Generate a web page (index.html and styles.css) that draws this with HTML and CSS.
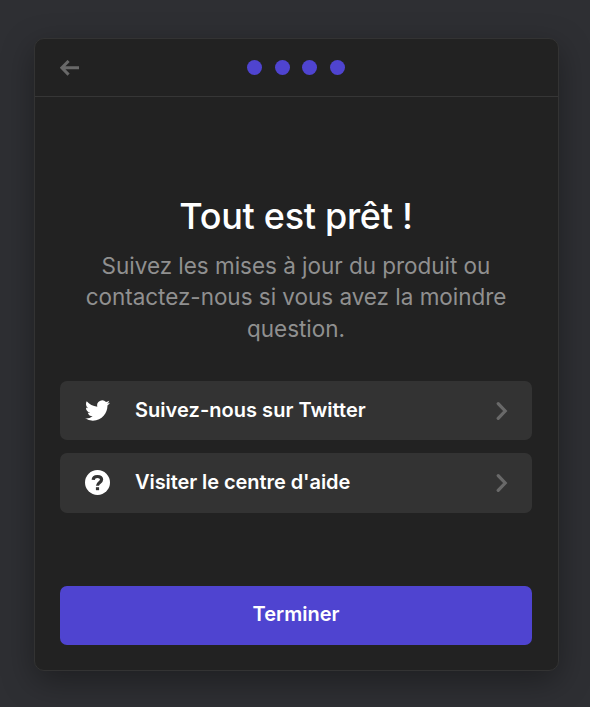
FILE: index.html
```html
<!DOCTYPE html>
<html lang="fr">
<head>
<meta charset="utf-8">
<title>Tout est prêt !</title>
<link rel="stylesheet" href="styles.css">
</head>
<body>
<main class="card">
  <header class="header">
    <svg class="back" viewBox="0 0 20 16" aria-hidden="true"><path d="M8.6 1 1.8 7.8l6.8 6.8M2.3 7.8H19"/></svg>
    <div class="steps"><i class="dot"></i><i class="dot"></i><i class="dot"></i><i class="dot"></i></div>
  </header>
  <section class="content">
    <h1 class="title">Tout est prêt !</h1>
    <p class="text">Suivez les mises à jour du produit ou contactez-nous si vous avez la moindre question.</p>
    <nav class="links">
      <a class="link">
        <svg class="icon" viewBox="0 0 24 24" aria-hidden="true"><path d="M23.95 4.57a10 10 0 0 1-2.82.77 4.96 4.96 0 0 0 2.16-2.72c-.95.56-2 .96-3.12 1.19a4.92 4.92 0 0 0-8.39 4.48C7.69 8.1 4.07 6.13 1.64 3.16a4.82 4.82 0 0 0-.67 2.48c0 1.71.87 3.21 2.19 4.1a4.9 4.9 0 0 1-2.23-.62v.06a4.92 4.92 0 0 0 3.95 4.83 5 5 0 0 1-2.21.08 4.94 4.94 0 0 0 4.6 3.42A9.87 9.87 0 0 1 0 19.54a13.99 13.99 0 0 0 7.55 2.21c9.05 0 14-7.5 14-13.98 0-.21 0-.42-.02-.63a9.94 9.94 0 0 0 2.46-2.55z"/></svg>
        <span class="label">Suivez-nous sur Twitter</span>
        <svg class="chevron" viewBox="0 0 12 20" aria-hidden="true"><path d="m2.2 2.6 7 7.4-7 7.4"/></svg>
      </a>
      <a class="link link-help">
        <svg class="icon" viewBox="0 0 25 25" aria-hidden="true"><circle cx="12.5" cy="12.5" r="12.5"/><path class="question" d="M8.2 9.9C8.3 7.6 9.9 6.5 12.4 6.5c2.6 0 4.2 1.1 4.2 3.1 0 2.8-4.1 2.9-4.1 6.2"/><path class="question-dot" d="M10.9 17.2h3.2v3h-3.2z"/></svg>
        <span class="label">Visiter le centre d'aide</span>
        <svg class="chevron" viewBox="0 0 12 20" aria-hidden="true"><path d="m2.2 2.6 7 7.4-7 7.4"/></svg>
      </a>
    </nav>
    <button class="done">Terminer</button>
  </section>
</main>
</body>
</html>
```
FILE: styles.css
```css
* { box-sizing: border-box; }
body {
  margin: 0;
  height: 707px;
  padding: 38px 0 0 34px;
  overflow: hidden;
  background: #2e2f33;
  font-family: Inter, sans-serif;
}
.card {
  width: 525px;
  height: 633px;
  border: 1px solid #333;
  border-radius: 10px;
  background: #222;
  box-shadow: 0 10px 32px rgba(0, 0, 0, .35);
}
.header {
  height: 58px;
  padding: 0 26px 0 25px;
  display: grid;
  grid-template-columns: 20px 1fr 20px;
  align-items: center;
  border-bottom: 1px solid #363636;
}
.back { width: 20px; height: 16px; fill: none; stroke: #696969; stroke-width: 3; }
.steps { display: flex; justify-content: center; gap: 12.6px; }
.dot { width: 15px; height: 15px; border-radius: 50%; background: #4f44d0; }
.content { padding: 96px 26px 0 25px; }
.title {
  margin: 0;
  color: #fff;
  font-size: 36px;
  font-weight: 500;
  line-height: 46px;
  letter-spacing: -.3px;
  text-align: center;
}
.text {
  margin: 11px 0 0;
  color: #909090;
  font-size: 22.5px;
  line-height: 31.4px;
  letter-spacing: -.03px;
  text-align: center;
}
.links { margin-top: 36.5px; display: grid; gap: 13px; }
.link {
  height: 59px;
  padding: 0 24px 0 25px;
  display: flex;
  align-items: center;
  border-radius: 7px;
  background: #333;
  color: #fff;
}
.link-help { height: 60px; }
.icon { width: 25px; height: 25px; fill: #fff; }
.link:first-child .icon, .link:first-child .chevron { margin-top: 1px; }
.icon .question { fill: none; stroke: #333; stroke-width: 3.2; }
.icon .question-dot { fill: #333; }
.label { flex: 1; margin-left: 25px; font-size: 20px; font-weight: 600; line-height: 30px; letter-spacing: .04px; }
.link-help .label { padding-bottom: 1px; letter-spacing: -.07px; }
.chevron { width: 12px; height: 20px; fill: none; stroke: #696969; stroke-width: 3.2; stroke-linecap: round; }
.done {
  display: block;
  width: 100%;
  height: 59px;
  margin-top: 73px;
  padding: 0 0 2px;
  border: 0;
  border-radius: 7px;
  background: #4f44d0;
  color: #fff;
  font: 600 20px/30px Inter, sans-serif;
}
```
